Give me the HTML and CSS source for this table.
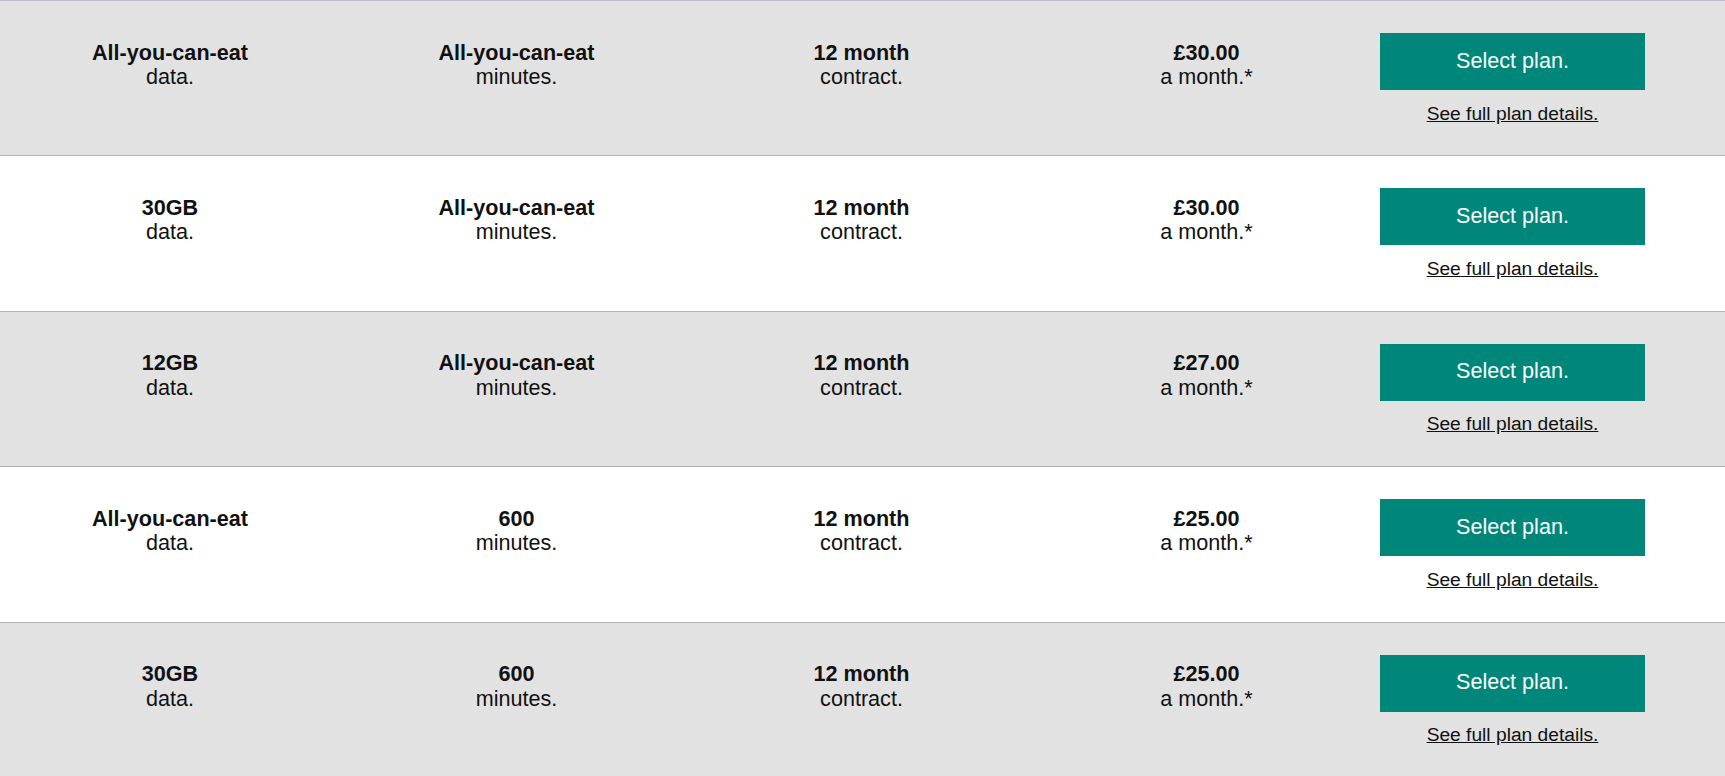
FILE: index.html
```html
<!DOCTYPE html>
<html lang="en">
<head>
<meta charset="utf-8">
<title>Plans</title>
<link rel="stylesheet" href="styles.css">
</head>
<body>
<div class="plans">
  <div class="plan alt">
    <div class="cell"><strong>All-you-can-eat</strong><span>data.</span></div>
    <div class="cell"><strong>All-you-can-eat</strong><span>minutes.</span></div>
    <div class="cell"><strong>12 month</strong><span>contract.</span></div>
    <div class="cell"><strong>£30.00</strong><span>a month.*</span></div>
    <div class="action"><a class="btn" href="#">Select plan.</a><a class="details" href="#">See full plan details.</a></div>
  </div>
  <div class="plan">
    <div class="cell"><strong>30GB</strong><span>data.</span></div>
    <div class="cell"><strong>All-you-can-eat</strong><span>minutes.</span></div>
    <div class="cell"><strong>12 month</strong><span>contract.</span></div>
    <div class="cell"><strong>£30.00</strong><span>a month.*</span></div>
    <div class="action"><a class="btn" href="#">Select plan.</a><a class="details" href="#">See full plan details.</a></div>
  </div>
  <div class="plan alt">
    <div class="cell"><strong>12GB</strong><span>data.</span></div>
    <div class="cell"><strong>All-you-can-eat</strong><span>minutes.</span></div>
    <div class="cell"><strong>12 month</strong><span>contract.</span></div>
    <div class="cell"><strong>£27.00</strong><span>a month.*</span></div>
    <div class="action"><a class="btn" href="#">Select plan.</a><a class="details" href="#">See full plan details.</a></div>
  </div>
  <div class="plan">
    <div class="cell"><strong>All-you-can-eat</strong><span>data.</span></div>
    <div class="cell"><strong>600</strong><span>minutes.</span></div>
    <div class="cell"><strong>12 month</strong><span>contract.</span></div>
    <div class="cell"><strong>£25.00</strong><span>a month.*</span></div>
    <div class="action"><a class="btn" href="#">Select plan.</a><a class="details" href="#">See full plan details.</a></div>
  </div>
  <div class="plan alt">
    <div class="cell"><strong>30GB</strong><span>data.</span></div>
    <div class="cell"><strong>600</strong><span>minutes.</span></div>
    <div class="cell"><strong>12 month</strong><span>contract.</span></div>
    <div class="cell"><strong>£25.00</strong><span>a month.*</span></div>
    <div class="action"><a class="btn" href="#">Select plan.</a><a class="details" href="#">See full plan details.</a></div>
  </div>
</div>
</body>
</html>
```

FILE: styles.css
```css
html, body {
  margin: 0;
  padding: 0;
  background: #ffffff;
}

body {
  font-family: "Liberation Sans", Arial, sans-serif;
  color: #111111;
  border-top: 1px solid #c9b7cd;
}

.plans {
  display: flex;
  flex-direction: column;
}

.plan {
  display: grid;
  grid-template-columns: repeat(5, 1fr);
  height: 154.4px;
  box-sizing: content-box;
  border-bottom: 1px solid #b4b4b4;
  background: #ffffff;
}

.plan.alt {
  background: #e2e2e2;
}

.cell {
  display: flex;
  flex-direction: column;
  align-items: center;
  padding-top: 39.5px;
  padding-right: 2px;
  font-size: 21.6px;
  line-height: 24.5px;
  text-align: center;
}

.cell:first-child {
  padding-right: 5px;
}

.cell strong {
  font-weight: bold;
}

.action {
  display: flex;
  flex-direction: column;
  align-items: center;
  width: 265px;
  padding-top: 32px;
}

.btn {
  display: flex;
  align-items: center;
  justify-content: center;
  width: 265px;
  height: 57px;
  background: #00877a;
  color: #ffffff;
  font-size: 21.6px;
  text-decoration: none;
  padding-bottom: 2px;
  box-sizing: border-box;
}

.details {
  margin-top: 12.5px;
  font-size: 19.2px;
  line-height: 22px;
  color: #111111;
  text-decoration: underline;
}
```
